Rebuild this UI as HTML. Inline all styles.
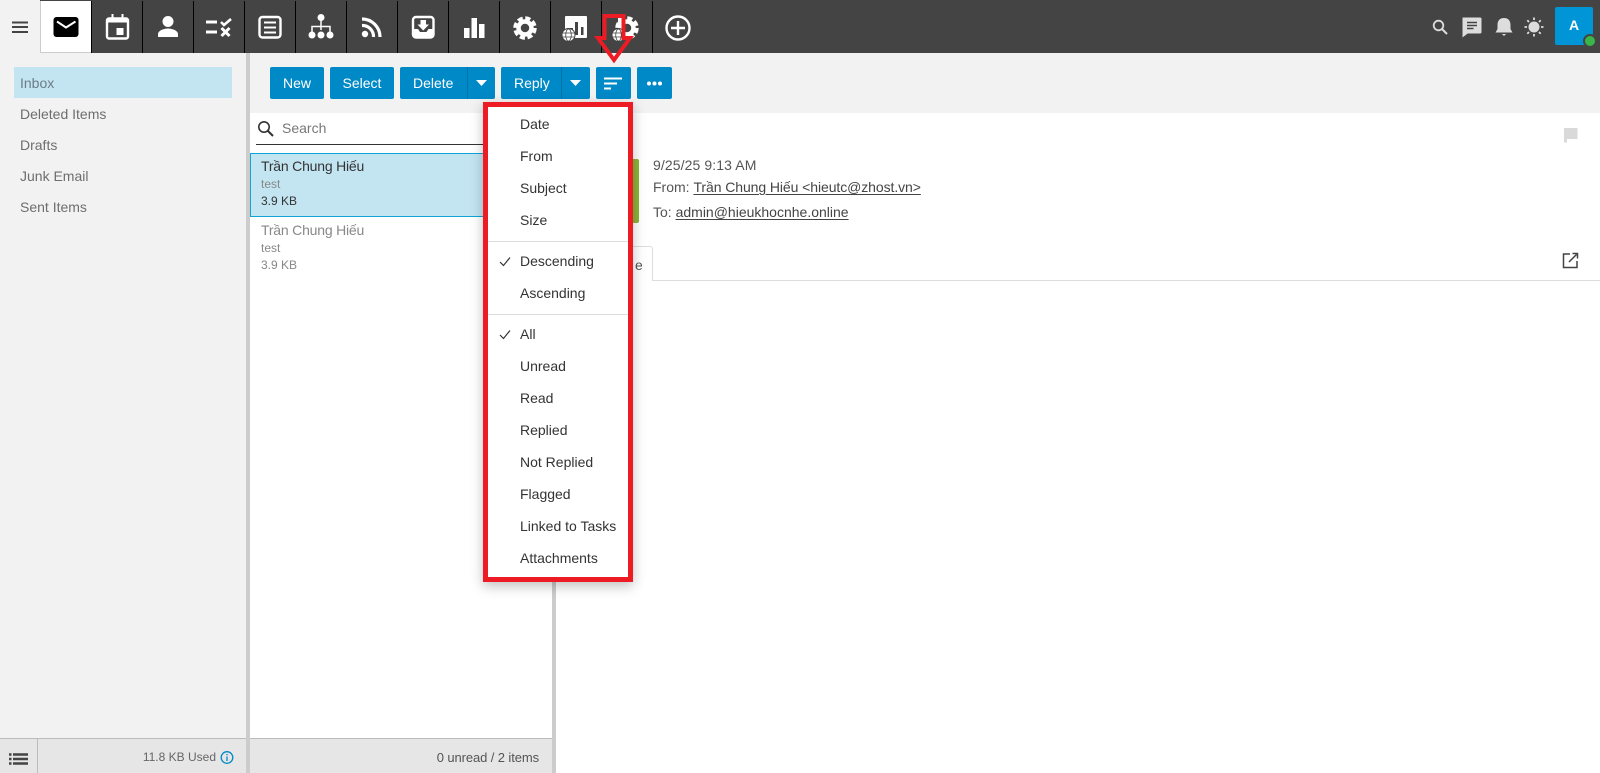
<!DOCTYPE html>
<html><head><meta charset="utf-8"><title>Mail</title>
<style>
html,body{margin:0;padding:0;width:1600px;height:773px;overflow:hidden;background:#fff;font-family:"Liberation Sans","Noto Sans CJK SC",sans-serif;font-size:14px}
.a{position:absolute;white-space:nowrap;line-height:18px}
.b{position:absolute;background:#0089c7;top:67px;height:32px;border-radius:2px;color:#fff;text-align:center;line-height:32px}
.m{position:absolute;left:520px;color:#333;line-height:18px;white-space:nowrap}
.f{color:#6e6e6e;left:20px}
u{text-underline-offset:2px}
</style></head><body>
<div style="position:absolute;left:0;top:0;width:1600px;height:53px;background:#444"></div>
<div style="position:absolute;left:0;top:0;width:40px;height:53px;background:#f2f2f2"></div>
<div style="position:absolute;left:40px;top:1px;width:50px;height:51px;background:#fff;border-left:1px solid #ccc;border-bottom:1px solid #ccc"></div>
<svg style="position:absolute;left:0;top:0" width="1600" height="53" viewBox="0 0 1600 53">
<g fill="#444"><rect x="12" y="21.500" width="16" height="2"/><rect x="12" y="26" width="16" height="2"/><rect x="12" y="31" width="16" height="2"/></g>
<g fill="#000"><rect x="91" y="1" width="1" height="52"/><rect x="142" y="1" width="1" height="52"/><rect x="193" y="1" width="1" height="52"/><rect x="244" y="1" width="1" height="52"/><rect x="295" y="1" width="1" height="52"/><rect x="346" y="1" width="1" height="52"/><rect x="397" y="1" width="1" height="52"/><rect x="448" y="1" width="1" height="52"/><rect x="499" y="1" width="1" height="52"/><rect x="550" y="1" width="1" height="52"/><rect x="601" y="1" width="1" height="52"/><rect x="652" y="1" width="1" height="52"/></g>
<rect x="53.500" y="17" width="25" height="20" rx="3" fill="#000"/><path d="M57 21.500l9 6 9.500-6" fill="none" stroke="#fff" stroke-width="2"/>
<g fill="none" stroke="#fff"><rect x="107" y="18.500" width="21" height="20" rx="2" stroke-width="2.400"/><path d="M106 21h23" stroke-width="3"/><path d="M112.500 14v5M122.500 14v5" stroke-width="2"/></g><rect x="116.500" y="28" width="7" height="7" fill="#fff"/>
<circle cx="168" cy="21.500" r="5.500" fill="#fff"/><path d="M158 37v-3c0-3 5-5.500 10-5.500s10 2.500 10 5.500v3z" fill="#fff"/>
<g fill="none" stroke="#fff"><path d="M206 22h11M206 32h11" stroke-width="3"/><path d="M221 22l3 3 7-6" stroke-width="2.600"/><path d="M221.500 28l8 8M229.500 28l-8 8" stroke-width="3"/></g>
<g fill="none" stroke="#fff"><rect x="259.500" y="17" width="21" height="20.500" rx="3" stroke-width="2.400"/><path d="M264 22.500h12M264 27.500h12M264 32.500h12" stroke-width="2"/></g>
<g fill="#fff"><circle cx="321" cy="17.500" r="3.500"/><circle cx="312" cy="35" r="3.500"/><circle cx="321" cy="35" r="3.500"/><circle cx="330" cy="35" r="3.500"/></g><path d="M321 20v10M312 32v-5.500h18v5.500" fill="none" stroke="#fff" stroke-width="1.500"/>
<circle cx="365" cy="34" r="3.200" fill="#fff"/><path d="M362 25.500a11 11 0 0 1 11.500 11.500M362 19a18 18 0 0 1 18 18" fill="none" stroke="#fff" stroke-width="3.200"/>
<rect x="413" y="17" width="20.500" height="20.500" rx="3" fill="none" stroke="#fff" stroke-width="2.400"/><path d="M413 29h5l2 3h6.500l2-3h5v8.500h-20.500z" fill="#fff"/><path d="M420.500 20h5.500v4.500h3l-5.800 6-5.700-6h3z" fill="#fff"/>
<g fill="#fff"><rect x="464" y="28" width="5.500" height="10"/><rect x="471.500" y="18" width="5.500" height="20"/><rect x="479" y="24" width="5.500" height="14"/></g>
<g fill="none" stroke="#fff"><circle cx="525" cy="28" r="6.500" stroke-width="4.500"/><circle cx="525" cy="28" r="10" stroke-width="3.500" stroke-dasharray="5.200 2.650"/></g>
<rect x="565" y="16" width="22" height="22" rx="1" fill="#fff"/><rect x="575" y="22" width="3" height="13" fill="#444"/><rect x="581" y="27" width="2.500" height="8" fill="#444"/><rect x="570" y="28" width="3" height="7" fill="#444"/>
<g fill="#fff" stroke="#444" stroke-width="1"><circle cx="568.500" cy="35" r="6.500"/></g><g fill="none" stroke="#444" stroke-width=".8"><ellipse cx="568.500" cy="35" rx="2.800" ry="6"/><path d="M562.500 33h12M562.500 37h12"/></g>
<g fill="none" stroke="#fff"><circle cx="627" cy="28" r="6.500" stroke-width="4.500"/><circle cx="627" cy="28" r="10" stroke-width="3.500" stroke-dasharray="5.200 2.650"/></g>
<rect x="618" y="18" width="4" height="10" fill="#fff"/>
<g fill="#fff" stroke="#444" stroke-width="1"><circle cx="618.500" cy="35" r="6.500"/></g><g fill="none" stroke="#444" stroke-width=".8"><ellipse cx="618.500" cy="35" rx="2.800" ry="6"/><path d="M612.500 33h12M612.500 37h12"/></g>
<circle cx="678" cy="28" r="11.500" fill="none" stroke="#fff" stroke-width="2.400"/><path d="M678 21v14M671 28h14" stroke="#fff" stroke-width="2.400"/>
<circle cx="1438.500" cy="25.500" r="4.800" fill="none" stroke="#ddd" stroke-width="1.800"/><path d="M1442 29l5 5" stroke="#ddd" stroke-width="2"/>
<path d="M1463 18h17a1 1 0 0 1 1 1v13a1 1 0 0 1-1 1h-12.500l-4.500 3.500z" fill="#ddd" stroke="#ddd"/><path d="M1467 22.500h10M1467 25.500h10M1467 28.500h6.500" stroke="#444" stroke-width="1.500"/>
<path d="M1504 18c4.500 0 6.500 3 6.500 7v4l2 3.500h-17l2-3.500v-4c0-4 2-7 6.500-7z" fill="#ddd"/><path d="M1502 34h4l-2 2z" fill="#ddd"/>
<circle cx="1534" cy="27" r="5.500" fill="#ddd"/><path d="M1534 17.500v2.500M1534 34v2.500M1524.500 27h2.500M1541 27h2.500M1527.300 20.300l1.700 1.700M1539 32l1.700 1.700M1527.300 33.700l1.700-1.700M1539 22l1.700-1.700" stroke="#ddd" stroke-width="1.800"/>
</svg>
<div style="position:absolute;left:1555px;top:7px;width:38px;height:38px;background:#0095d6;border-radius:2px;color:#fff;font-weight:bold;text-align:center;line-height:36px;font-size:14px">A</div>
<div style="position:absolute;left:1583px;top:34px;width:10px;height:10px;background:#3ab54a;border-radius:50%;border:2px solid #444"></div>

<!-- sidebar -->
<div style="position:absolute;left:0;top:53px;width:246px;height:686px;background:#f2f2f2"></div>
<div style="position:absolute;left:246px;top:53px;width:4px;height:720px;background:#ccc"></div>
<div style="position:absolute;left:14px;top:67px;width:218px;height:31px;background:#c3e5f2"></div>
<div class="a f" style="top:74px;color:#6b7b88">Inbox</div>
<div class="a f" style="top:105px">Deleted Items</div>
<div class="a f" style="top:136px">Drafts</div>
<div class="a f" style="top:167px">Junk Email</div>
<div class="a f" style="top:198px">Sent Items</div>

<!-- toolbar -->
<div style="position:absolute;left:250px;top:53px;width:1350px;height:60px;background:#f2f2f2"></div>
<div class="b" style="left:270px;width:54px">New</div>
<div class="b" style="left:330px;width:64px">Select</div>
<div class="b" style="left:400px;width:95px;text-align:left;text-indent:13px;">Delete</div>
<div style="position:absolute;left:467px;top:67px;width:1px;height:32px;background:#0074aa"></div>
<div class="b" style="left:501px;width:89px;text-align:left;text-indent:13px">Reply</div>
<div style="position:absolute;left:561px;top:67px;width:1px;height:32px;background:#0074aa"></div>
<div class="b" style="left:596px;width:35px"></div>
<div class="b" style="left:637px;width:35px"></div>
<svg style="position:absolute;left:0;top:0" width="1600" height="113" viewBox="0 0 1600 113">
<path d="M476 80h11l-5.500 6zM570 80h11l-5.500 6z" fill="#fff"/>
<path d="M604 78.500h18M604 83.500h13M604 88.500h7" stroke="#fff" stroke-width="2"/>
<circle cx="649" cy="83.500" r="2" fill="#fff"/><circle cx="654.500" cy="83.500" r="2" fill="#fff"/><circle cx="660" cy="83.500" r="2" fill="#fff"/>
</svg>

<!-- list -->
<svg style="position:absolute;left:256px;top:119px" width="20" height="20" viewBox="0 0 20 20"><circle cx="8" cy="8" r="5.200" fill="none" stroke="#333" stroke-width="1.600"/><path d="M12 12l5 5" stroke="#333" stroke-width="2"/></svg>
<div class="a" style="left:282px;top:119px;color:#777">Search</div>
<div style="position:absolute;left:256px;top:144px;width:228px;height:1px;background:#333"></div>
<div style="position:absolute;left:250px;top:153px;width:240px;height:62px;background:#c3e5f2;border:1px solid #0ea5d6;border-right:0"></div>
<div class="a" style="left:261px;top:157px;color:#333;letter-spacing:-.2px">Trần Chung Hiếu</div>
<div class="a" style="left:261px;top:175px;color:#888;font-size:12px">test</div>
<div class="a" style="left:261px;top:192px;color:#333;font-size:12px">3.9 KB</div>
<div class="a" style="left:261px;top:221px;color:#888;letter-spacing:-.2px">Trần Chung Hiếu</div>
<div class="a" style="left:261px;top:239px;color:#888;font-size:12px">test</div>
<div class="a" style="left:261px;top:256px;color:#888;font-size:12px">3.9 KB</div>
<div style="position:absolute;left:552px;top:113px;width:4px;height:660px;background:#ccc"></div>

<!-- status -->
<div style="position:absolute;left:0;top:738px;width:246px;height:35px;background:#e6e6e6;border-top:1px solid #bbb;box-sizing:border-box"></div>
<div style="position:absolute;left:250px;top:738px;width:302px;height:35px;background:#e6e6e6;border-top:1px solid #bbb;box-sizing:border-box"></div>
<div style="position:absolute;left:37px;top:738px;width:1px;height:35px;background:#bbb"></div>
<svg style="position:absolute;left:0;top:739px" width="246" height="34" viewBox="0 0 246 34">
<path d="M9 15.500h2.500M9 20h2.500M9 24.500h2.500M13 15.500h15M13 20h15M13 24.500h15" stroke="#444" stroke-width="2.400"/>
<circle cx="227" cy="18.500" r="5.800" fill="none" stroke="#0089c7" stroke-width="1.300"/><path d="M227 17.500v4.500M227 15v1.200" stroke="#0089c7" stroke-width="1.300"/>
</svg>
<div class="a" style="right:1384px;top:748px;color:#666;font-size:12px">11.8 KB Used</div>
<div class="a" style="right:1061px;top:749px;color:#555;font-size:13px;letter-spacing:-.1px">0 unread / 2 items</div>

<!-- reading pane -->
<div style="position:absolute;left:590px;top:159px;width:49px;height:64px;background:#8fb33a;border-radius:2px"></div>
<div class="a" style="left:653px;top:156px;color:#555;letter-spacing:.1px">9/25/25 9:13 AM</div>
<div class="a" style="left:653px;top:178px;color:#555">From: <u style="color:#444;letter-spacing:-.08px">Trần Chung Hiếu &lt;hieutc@zhost.vn&gt;</u></div>
<div class="a" style="left:653px;top:203px;color:#555">To: <u style="color:#444">admin@hieukhocnhe.online</u></div>
<div style="position:absolute;left:556px;top:280px;width:1044px;height:1px;background:#ddd"></div>
<div style="position:absolute;left:560px;top:246px;width:93px;height:35px;background:#fff;border:1px solid #ddd;border-bottom:0;border-radius:3px 3px 0 0;box-sizing:border-box"></div>
<div class="a" style="left:635px;top:256px;color:#555">e</div>
<svg style="position:absolute;left:1560px;top:124px" width="24" height="148" viewBox="0 0 24 148">
<path d="M4 4h13.500v11h-10.500v3.500h-3z" fill="#d9d9d9"/>
<path d="M10 130h-6.500v13.500h13.500v-6.500" fill="none" stroke="#444" stroke-width="1.500"/><path d="M9 138l7.500-7.500M12.500 129.500h5v5" fill="none" stroke="#444" stroke-width="1.500"/>
</svg>

<!-- dropdown -->
<div style="position:absolute;left:483px;top:102px;width:150px;height:480px;background:#fff;border:5px solid #ed1c24;box-sizing:border-box;box-shadow:0 4px 12px rgba(0,0,0,.25)"></div>
<div style="position:absolute;left:488px;top:241px;width:140px;height:1px;background:#ddd"></div>
<div style="position:absolute;left:488px;top:314px;width:140px;height:1px;background:#ddd"></div>
<div class="m" style="top:115px">Date</div>
<div class="m" style="top:147px">From</div>
<div class="m" style="top:179px">Subject</div>
<div class="m" style="top:211px">Size</div>
<div class="m" style="top:252px">Descending</div>
<div class="m" style="top:284px">Ascending</div>
<div class="m" style="top:325px">All</div>
<div class="m" style="top:357px">Unread</div>
<div class="m" style="top:389px">Read</div>
<div class="m" style="top:421px">Replied</div>
<div class="m" style="top:453px">Not Replied</div>
<div class="m" style="top:485px">Flagged</div>
<div class="m" style="top:517px">Linked to Tasks</div>
<div class="m" style="top:549px">Attachments</div>
<svg style="position:absolute;left:0;top:0" width="1600" height="350" viewBox="0 0 1600 350">
<path d="M500 262l3.500 3.500 6.500-8M500 335l3.500 3.500 6.500-8" fill="none" stroke="#333" stroke-width="1.200"/>
<path d="M604.500 38V16h19v22h6.500l-16 22-16-22z" fill="none" stroke="#ed1c24" stroke-width="4"/>
</svg>
</body></html>
